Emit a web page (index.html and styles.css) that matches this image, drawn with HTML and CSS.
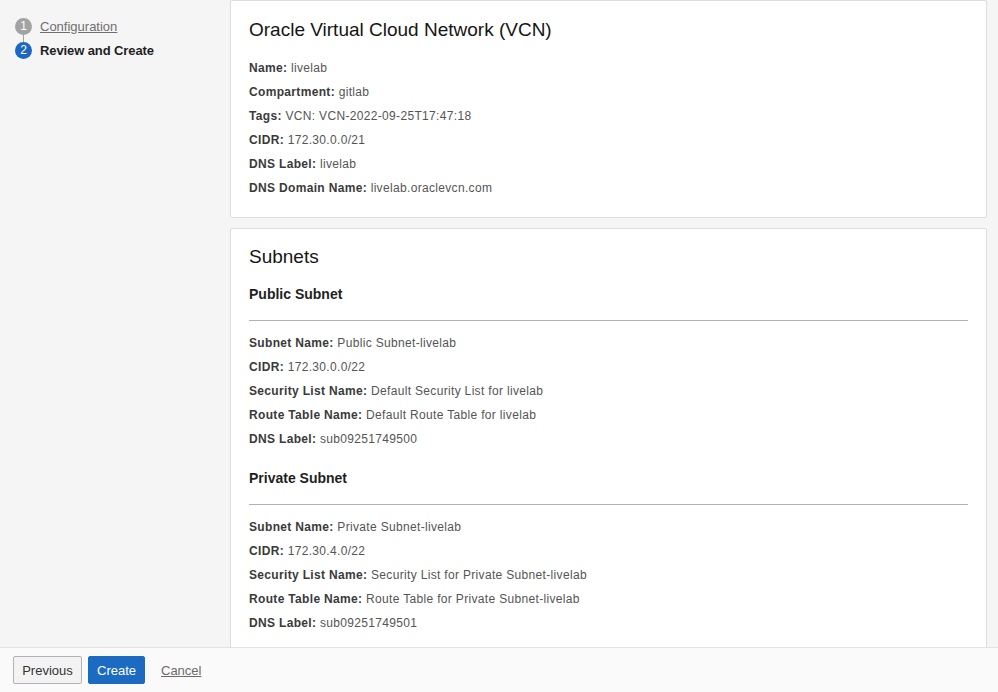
FILE: index.html
```html
<!DOCTYPE html>
<html lang="en">
<head>
<meta charset="utf-8">
<title>Create VCN - Review and Create</title>
<link rel="stylesheet" href="styles.css">
</head>
<body>
<div class="layout">
  <nav class="sidebar">
    <div class="step step-done">
      <span class="step-num">1</span>
      <a class="step-link" href="#">Configuration</a>
    </div>
    <div class="step step-current">
      <span class="step-num">2</span>
      <span class="step-label">Review and Create</span>
    </div>
  </nav>
  <main class="content">
    <section class="card">
      <h2 class="card-title">Oracle Virtual Cloud Network (VCN)</h2>
      <div class="row"><b>Name:</b> livelab</div>
      <div class="row"><b>Compartment:</b> gitlab</div>
      <div class="row"><b>Tags:</b> VCN: VCN-2022-09-25T17:47:18</div>
      <div class="row"><b>CIDR:</b> 172.30.0.0/21</div>
      <div class="row"><b>DNS Label:</b> livelab</div>
      <div class="row"><b>DNS Domain Name:</b> livelab.oraclevcn.com</div>
    </section>
    <section class="card card-subnets">
      <h2 class="card-title card-title-subnets">Subnets</h2>
      <h3 class="sub-title">Public Subnet</h3>
      <hr class="sep">
      <div class="row"><b>Subnet Name:</b> Public Subnet-livelab</div>
      <div class="row"><b>CIDR:</b> 172.30.0.0/22</div>
      <div class="row"><b>Security List Name:</b> Default Security List for livelab</div>
      <div class="row"><b>Route Table Name:</b> Default Route Table for livelab</div>
      <div class="row"><b>DNS Label:</b> sub09251749500</div>
      <h3 class="sub-title sub-title-next">Private Subnet</h3>
      <hr class="sep">
      <div class="row"><b>Subnet Name:</b> Private Subnet-livelab</div>
      <div class="row"><b>CIDR:</b> 172.30.4.0/22</div>
      <div class="row"><b>Security List Name:</b> Security List for Private Subnet-livelab</div>
      <div class="row"><b>Route Table Name:</b> Route Table for Private Subnet-livelab</div>
      <div class="row"><b>DNS Label:</b> sub09251749501</div>
    </section>
  </main>
</div>
<footer class="footer">
  <button class="btn btn-secondary" type="button">Previous</button>
  <button class="btn btn-primary" type="button">Create</button>
  <a class="cancel" href="#">Cancel</a>
</footer>
</body>
</html>
```
FILE: styles.css
```css
html, body {
  margin: 0;
  padding: 0;
}
body {
  height: 692px;
  display: flex;
  flex-direction: column;
  overflow: hidden;
  font-family: "Liberation Sans", Arial, sans-serif;
  color: #333;
  background: #f5f5f5;
}
.layout {
  flex: 1;
  min-height: 0;
  display: flex;
  overflow: hidden;
  background: #f5f5f5;
}
.sidebar {
  width: 230px;
  flex-shrink: 0;
  box-sizing: border-box;
  padding: 14px 0 0 15px;
}
.step {
  position: relative;
  display: flex;
  align-items: center;
  gap: 8px;
  height: 24px;
  font-size: 13px;
}
.step-num {
  width: 17px;
  height: 17px;
  border-radius: 50%;
  color: #fff;
  font-size: 12px;
  line-height: 17px;
  text-align: center;
  flex-shrink: 0;
}
.step-done .step-num {
  background: #a3a3a3;
}
.step-done::after {
  content: "";
  position: absolute;
  left: 8px;
  top: 20px;
  width: 1px;
  height: 8px;
  background: #a3a3a3;
}
.step-current .step-num {
  background: #1b68c0;
}
.step-link {
  color: #6f6f6f;
  text-decoration: underline;
}
.step-label {
  font-weight: bold;
  color: #1f1f1f;
  letter-spacing: -0.1px;
}
.content {
  flex: 1;
  min-width: 0;
  display: flex;
  flex-direction: column;
  gap: 10px;
  padding-right: 11px;
}
.card {
  flex-shrink: 0;
  background: #fff;
  border: 1px solid #dedede;
  border-radius: 2px;
  padding: 17px 18px 17px 18px;
}
.card-subnets {
  padding-top: 16px;
}
.card-title {
  margin: 0 0 14px;
  font-size: 19px;
  line-height: 24px;
  font-weight: normal;
  color: #161513;
}
.card-title-subnets {
  margin-bottom: 15px;
}
.row {
  font-size: 12px;
  line-height: 24px;
  color: #555;
  letter-spacing: 0.33px;
}
.row b {
  color: #3a3a3a;
}
.sub-title {
  margin: 0;
  font-size: 14px;
  line-height: 20px;
  font-weight: bold;
  color: #1f1f1f;
}
.sub-title-next {
  margin-top: 17px;
}
.sep {
  margin: 16px 0 10px;
  border: 0;
  border-top: 1px solid #acb1ba;
  height: 0;
}
.footer {
  height: 45px;
  flex-shrink: 0;
  box-sizing: border-box;
  border-top: 1px solid #e2e2e2;
  background: #fafafa;
  display: flex;
  align-items: center;
  gap: 6px;
  padding: 0 13px;
}
.btn {
  height: 28px;
  font-family: "Liberation Sans", Arial, sans-serif;
  font-size: 13px;
  border-radius: 2px;
  padding: 0 8px;
  cursor: pointer;
}
.btn-secondary {
  background: #f3f3f3;
  border: 1px solid #b3b3b3;
  color: #333;
  width: 69px;
}
.btn-primary {
  background: #1c6bc3;
  border: 1px solid #1c6bc3;
  color: #fff;
  width: 57px;
}
.cancel {
  margin-left: 10px;
  font-size: 13px;
  color: #6b6b6b;
  text-decoration: underline;
}
```
